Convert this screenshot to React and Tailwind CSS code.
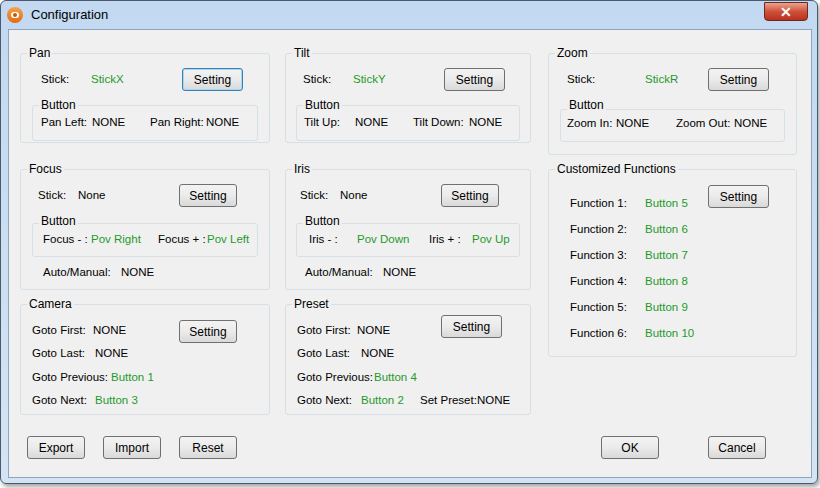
const F = { fontFamily: '"Liberation Sans", Arial, sans-serif' };
const G = 'text-[#1f9a2a]';

function Btn({ children, w = 'w-[58px]', focus, cls = '' }) {
  return (
    <div className={`${w} shrink-0 h-[23px] flex items-center justify-center rounded-[3px] border ${focus ? 'border-[#3c7fb1] shadow-[inset_0_0_0_1px_#a6d8f5]' : 'border-[#707070]'} bg-gradient-to-b from-[#f3f3f3] via-[#ebebeb] to-[#d9d9d9] text-[12px] text-black ${cls}`}>{children}</div>
  );
}

function Group({ title, h, children, cls = '' }) {
  return (
    <div className={`relative border border-[#d5dfe5] rounded-[3px] ${h} ${cls}`}>
      <span className="absolute left-[6px] -top-[8px] bg-[#f0f0f0] px-[2px] leading-[14px] text-[12px] whitespace-nowrap">{title}</span>
      {children}
    </div>
  );
}

function Row({ children, cls = '' }) {
  return <div className={`flex items-center h-[23px] text-[11.5px] whitespace-nowrap [&>span]:shrink-0 ${cls}`}>{children}</div>;
}

export default function App() {
  return (
    <div style={F} className="w-[820px] h-[488px] bg-white text-black text-[12px]">
      <div className="w-[818px] h-[484px] rounded-[6px] border border-[#4a5a6a] bg-gradient-to-b from-[#c2d9f1] to-[#d4e4f4] shadow-[2px_3px_4px_rgba(0,0,0,0.35)] flex flex-col">
        <div className="h-[28px] flex items-center pl-[6px] relative">
          <div className="w-[16px] h-[16px] rounded-full bg-gradient-to-b from-[#f7a14a] to-[#e06c10] flex items-center justify-center">
            <div className="w-[8px] h-[6px] rounded-full bg-white flex items-center justify-center"><div className="w-[4px] h-[4px] rounded-full bg-[#c05a0a]" /></div>
          </div>
          <span className="ml-[8px] text-[13px]">Configuration</span>
          <div className="absolute right-[9px] top-[1px] w-[44px] h-[19px] rounded-b-[4px] border border-[#6b2a20] bg-gradient-to-b from-[#e8a28f] via-[#d0503a] to-[#b9301c] flex items-center justify-center text-white font-bold text-[14px] leading-none">✕</div>
        </div>
        <div className="ml-[7px] w-[804px] h-[449px] border border-[#8ea4bd] bg-[#f0f0f0] flex flex-col">
          <div className="flex pt-[23px] pl-[11px]">
            {/* column 1 */}
            <div className="w-[250px] flex flex-col">
              <Group title="Pan" h="h-[90px]">
                <Row cls="mt-[14px]"><span className="ml-[20px] w-[50px]">Stick:</span><span className={`${G} w-[91px]`}>StickX</span><Btn w="w-[61px]" focus>Setting</Btn></Row>
                <div className="relative mx-[11px] mt-[14px] h-[36px] border border-[#d5dfe5] rounded-[3px]">
                  <span className="absolute left-[6px] -top-[8px] bg-[#f0f0f0] px-[2px] leading-[14px]">Button</span>
                  <Row cls="mt-[5px]"><span className="ml-[8px] w-[51px]">Pan Left:</span><span className="w-[58px]">NONE</span><span className="w-[56px]">Pan Right:</span><span>NONE</span></Row>
                </div>
              </Group>
              <Group title="Focus" h="h-[121px]" cls="mt-[26px]">
                <Row cls="mt-[14px]"><span className="ml-[17px] w-[40px]">Stick:</span><span className="w-[101px]">None</span><Btn>Setting</Btn></Row>
                <div className="relative mx-[11px] mt-[16px] h-[34px] border border-[#d5dfe5] rounded-[3px]">
                  <span className="absolute left-[6px] -top-[10px] bg-[#f0f0f0] px-[2px] leading-[14px]">Button</span>
                  <Row cls="mt-[4px]"><span className="ml-[10px] w-[48px]">Focus - :</span><span className={`${G} w-[67px]`}>Pov Right</span><span className="w-[49px]">Focus + :</span><span className={G}>Pov Left</span></Row>
                </div>
                <Row cls="mt-[4px]"><span className="ml-[22px] w-[78px]">Auto/Manual:</span><span>NONE</span></Row>
              </Group>
              <Group title="Camera" h="h-[111px]" cls="mt-[14px]">
                <div className="flex mt-[14px]">
                  <div className="flex flex-col w-[158px] shrink-0">
                    <Row><span className="ml-[11px] w-[61px]">Goto First:</span><span>NONE</span></Row>
                    <Row><span className="ml-[11px] w-[63px]">Goto Last:</span><span>NONE</span></Row>
                    <Row cls="mt-[1px]"><span className="ml-[11px] w-[79px]">Goto Previous:</span><span className={G}>Button 1</span></Row>
                    <Row><span className="ml-[11px] w-[63px]">Goto Next:</span><span className={G}>Button 3</span></Row>
                  </div>
                  <Btn cls="mt-[1px]">Setting</Btn>
                </div>
              </Group>
            </div>
            {/* column 2 */}
            <div className="w-[246px] ml-[15px] flex flex-col">
              <Group title="Tilt" h="h-[90px]">
                <Row cls="mt-[14px]"><span className="ml-[17px] w-[50px]">Stick:</span><span className={`${G} w-[91px]`}>StickY</span><Btn w="w-[61px]">Setting</Btn></Row>
                <div className="relative mx-[10px] mt-[14px] h-[36px] border border-[#d5dfe5] rounded-[3px]">
                  <span className="absolute left-[6px] -top-[8px] bg-[#f0f0f0] px-[2px] leading-[14px]">Button</span>
                  <Row cls="mt-[5px]"><span className="ml-[7px] w-[51px]">Tilt Up:</span><span className="w-[58px]">NONE</span><span className="w-[56px]">Tilt Down:</span><span>NONE</span></Row>
                </div>
              </Group>
              <Group title="Iris" h="h-[121px]" cls="mt-[26px]">
                <Row cls="mt-[14px]"><span className="ml-[14px] w-[40px]">Stick:</span><span className="w-[101px]">None</span><Btn>Setting</Btn></Row>
                <div className="relative mx-[10px] mt-[16px] h-[34px] border border-[#d5dfe5] rounded-[3px]">
                  <span className="absolute left-[6px] -top-[10px] bg-[#f0f0f0] px-[2px] leading-[14px]">Button</span>
                  <Row cls="mt-[4px]"><span className="ml-[12px] w-[48px]">Iris - :</span><span className={`${G} w-[72px]`}>Pov Down</span><span className="w-[43px]">Iris + :</span><span className={G}>Pov Up</span></Row>
                </div>
                <Row cls="mt-[4px]"><span className="ml-[19px] w-[78px]">Auto/Manual:</span><span>NONE</span></Row>
              </Group>
              <Group title="Preset" h="h-[111px]" cls="mt-[14px]">
                <div className="flex mt-[14px]">
                  <div className="flex flex-col w-[155px] shrink-0">
                    <Row><span className="ml-[11px] w-[60px]">Goto First:</span><span>NONE</span></Row>
                    <Row><span className="ml-[11px] w-[64px]">Goto Last:</span><span>NONE</span></Row>
                    <Row cls="mt-[1px]"><span className="ml-[11px] w-[77px]">Goto Previous:</span><span className={G}>Button 4</span></Row>
                  </div>
                  <Btn w="w-[61px]" cls="-mt-[4px]">Setting</Btn>
                </div>
                <Row><span className="ml-[11px] w-[64px]">Goto Next:</span><span className={`${G} w-[59px]`}>Button 2</span><span className="w-[57px]">Set Preset:</span><span>NONE</span></Row>
              </Group>
            </div>
            {/* column 3 */}
            <div className="w-[249px] ml-[17px] flex flex-col">
              <Group title="Zoom" h="h-[102px]">
                <Row cls="mt-[14px]"><span className="ml-[18px] w-[78px]">Stick:</span><span className={`${G} w-[63px]`}>StickR</span><Btn w="w-[61px]">Setting</Btn></Row>
                <div className="relative mx-[11px] mt-[18px] h-[33px] border border-[#d5dfe5] rounded-[3px]">
                  <span className="absolute left-[6px] -top-[12px] bg-[#f0f0f0] px-[2px] leading-[14px]">Button</span>
                  <Row cls="mt-[2px]"><span className="ml-[6px] w-[49px]">Zoom In:</span><span className="w-[60px]">NONE</span><span className="w-[58px]">Zoom Out:</span><span>NONE</span></Row>
                </div>
              </Group>
              <Group title="Customized Functions" h="h-[188px]" cls="mt-[14px]">
                <div className="flex mt-[15px]">
                  <div className="flex flex-col mt-[6px] w-[159px] shrink-0">
                    {[5, 6, 7, 8, 9, 10].map((n, i) => (
                      <Row key={n} cls="h-[26px]"><span className="ml-[21px] w-[75px]">Function {i + 1}:</span><span className={G}>Button {n}</span></Row>
                    ))}
                  </div>
                  <Btn w="w-[61px]">Setting</Btn>
                </div>
              </Group>
            </div>
          </div>
          <div className="flex mt-[21px] pl-[18px]">
            <Btn>Export</Btn>
            <Btn cls="ml-[18px]">Import</Btn>
            <Btn cls="ml-[18px]">Reset</Btn>
            <Btn cls="ml-[364px]">OK</Btn>
            <Btn cls="ml-[49px]">Cancel</Btn>
          </div>
        </div>
      </div>
    </div>
  );
}
